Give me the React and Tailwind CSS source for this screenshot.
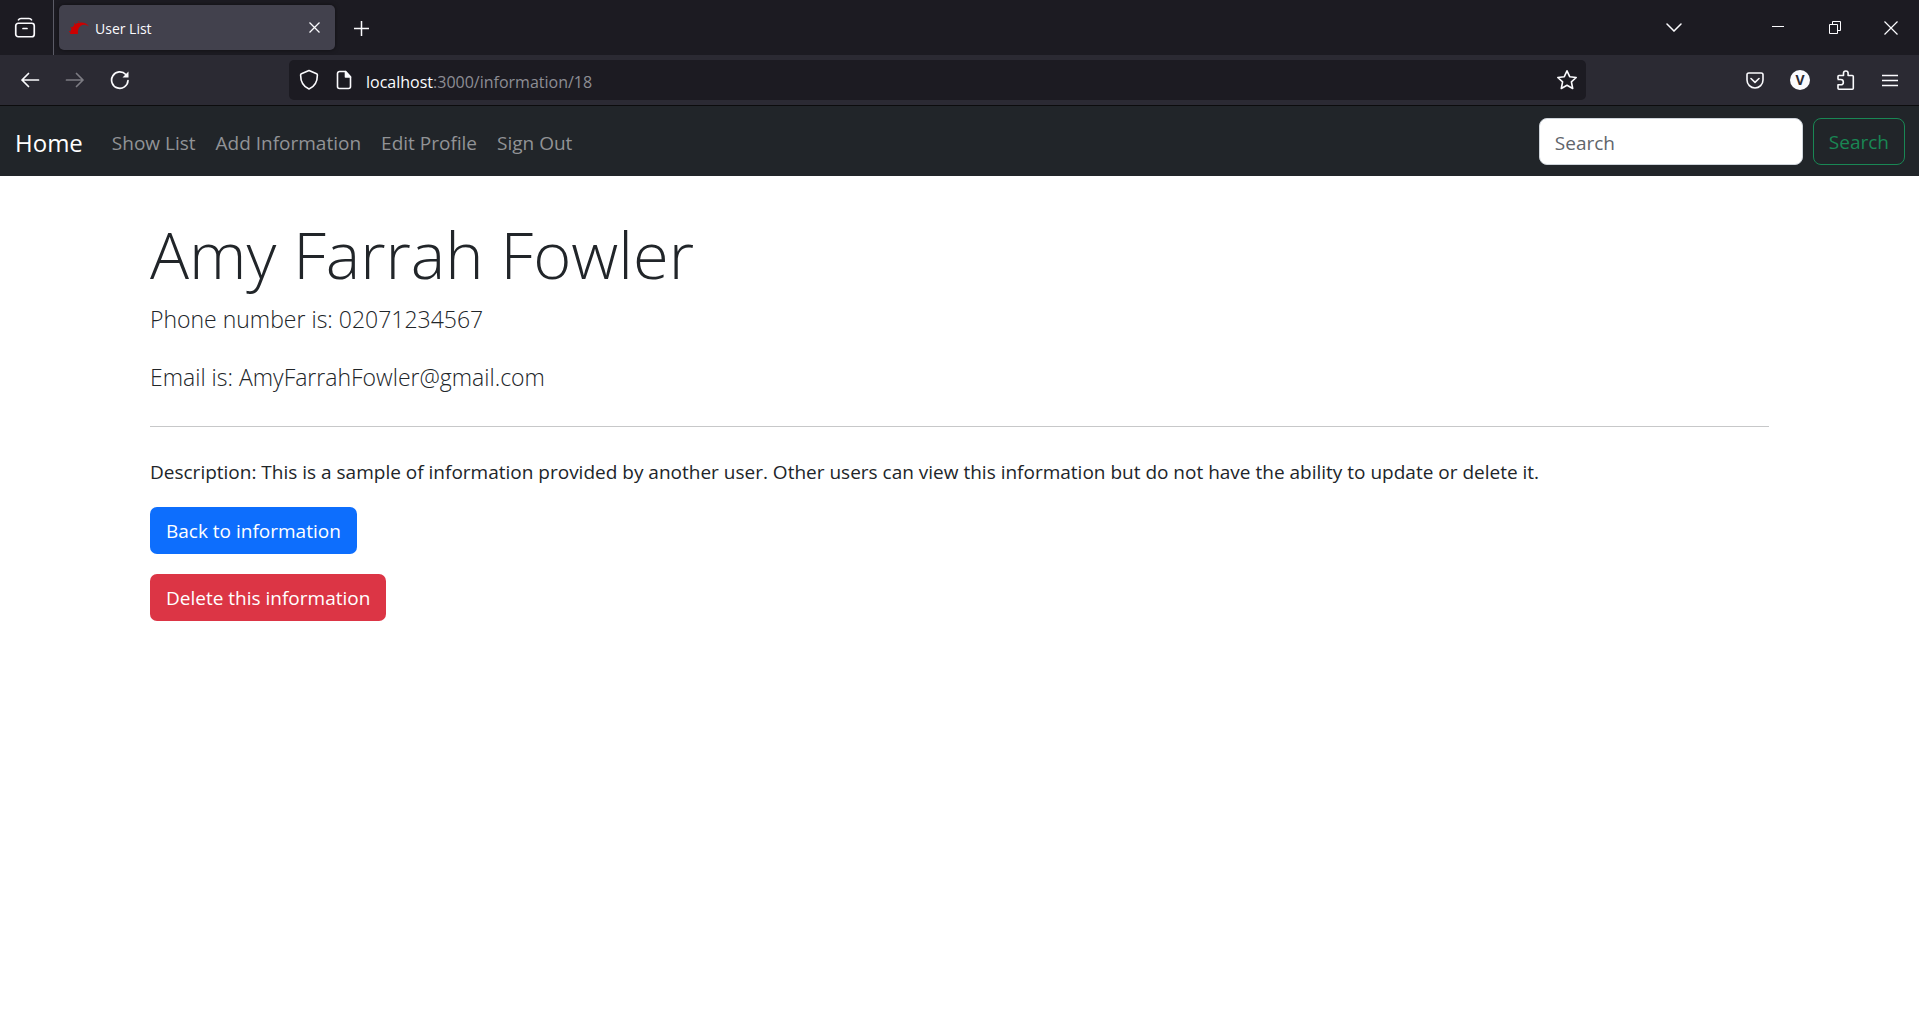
const ICON = 'shrink-0 fill-none stroke-[#fbfbfe]';

function NavItem({ children }) {
  return (
    <a href="#" className="text-[19px] leading-[30px] text-[#919396]">
      {children}
    </a>
  );
}

function ToolButton({ label, children }) {
  return (
    <button type="button" aria-label={label} className="grid size-10 place-items-center">
      {children}
    </button>
  );
}

function TabBar() {
  return (
    <div className="flex h-[55px] items-center bg-[#1c1b22]">
      <div className="flex h-full w-[54px] items-center justify-center border-r border-[#5b5b66] pr-1">
        <button type="button" aria-label="Firefox View">
          <svg width="22" height="22" viewBox="0 0 22 22" className={ICON} strokeWidth="1.700" strokeLinecap="round">
            <rect x="1.75" y="6.25" width="18.5" height="13.5" rx="2.5" />
            <path d="M4.500 2.800C5 1.900 6 1.500 7 1.500h8c1 0 2 .4 2.500 1.300M9 11.500h4" />
          </svg>
        </button>
      </div>
      <div className="ml-[5px] flex h-[45px] w-[276px] items-center rounded-[5px] bg-[#42414d] pr-[15px] pl-[10px] shadow-[0_0_4px_rgba(0,0,0,0.5)]">
        <svg width="20" height="20" viewBox="0 0 20 20" className="shrink-0 fill-[#cc0000]">
          <path d="M1 16C2 9 6 4.500 12 4.500c4 0 6 1.500 8 4-3-2-6-2.500-8.500-.5C9 10 8.500 13 9 16z" />
          <path d="M0 13l1.500.5-.3 1L0 14zM2 8.800l1.200.7-.5.9-1.200-.7zM5.500 5l.8 1-.8.7-.8-1zM10 3l.4 1-1 .3-.4-1z" />
        </svg>
        <span className="ml-[6px] grow pt-[2px] text-[14px] text-[#fbfbfe]">User List</span>
        <button type="button" aria-label="Close tab">
          <svg width="11" height="11" viewBox="0 0 11 11" className={ICON} strokeWidth="1.300">
            <path d="M.5.5l10 10M10.500.5l-10 10" />
          </svg>
        </button>
      </div>
      <button type="button" aria-label="New tab" className="ml-[19px] pt-[2px]">
        <svg width="15" height="15" viewBox="0 0 15 15" className={ICON} strokeWidth="1.500">
          <path d="M0 7.500h15M7.500 0v15" />
        </svg>
      </button>
      <button type="button" aria-label="List all tabs" className="ml-auto">
        <svg width="16" height="9" viewBox="0 0 16 9" className={ICON} strokeWidth="1.500" strokeLinecap="round">
          <path d="M1 1l7 7 7-7" />
        </svg>
      </button>
      <button type="button" aria-label="Minimize" className="ml-[90px]">
        <svg width="12" height="12" viewBox="0 0 12 12" className={ICON}>
          <path d="M0 4.500h12" />
        </svg>
      </button>
      <button type="button" aria-label="Restore" className="ml-[45px]">
        <svg width="12" height="13" viewBox="0 0 12 13" className={ICON}>
          <path d="M.5 3.500h8v9h-8zM3.500 3.500v-3h8v9h-3" />
        </svg>
      </button>
      <button type="button" aria-label="Close window" className="mr-[21px] ml-[43px]">
        <svg width="14" height="14" viewBox="0 0 14 14" className={ICON} strokeWidth="1.200">
          <path d="M.5.5l13 13M13.500.5l-13 13" />
        </svg>
      </button>
    </div>
  );
}

function AddressBar() {
  return (
    <div className="flex h-[51px] items-center border-b border-[#0c0c0d] bg-[#2b2a33]">
      <div className="flex w-[289px] gap-[5px] pl-[10px]">
        <ToolButton label="Back">
          <svg width="20" height="16" viewBox="0 0 20 16" className={ICON} strokeWidth="1.700" strokeLinecap="round" strokeLinejoin="round">
            <path d="M18.500 8H2M8.500 1.500L2 8l6.500 6.500" />
          </svg>
        </ToolButton>
        <ToolButton label="Forward">
          <svg width="20" height="16" viewBox="0 0 20 16" className="fill-none stroke-[#7c7b82]" strokeWidth="1.700" strokeLinecap="round" strokeLinejoin="round">
            <path d="M1.500 8H18M11.500 1.500L18 8l-6.500 6.500" />
          </svg>
        </ToolButton>
        <ToolButton label="Reload">
          <svg width="20" height="20" viewBox="0 0 20 20" className={ICON} strokeWidth="1.700" strokeLinecap="round">
            <path d="M18 10.500A8.200 8.200 0 1 1 15.800 4.500" />
            <path d="M18.500 1.500v6h-6z" className="fill-[#fbfbfe] stroke-none" />
          </svg>
        </ToolButton>
      </div>
      <div className="flex h-10 w-[1297px] min-w-0 shrink items-center rounded-[5px] bg-[#1c1b22] pr-[8px] pl-[10px]">
        <svg width="20" height="22" viewBox="0 0 20 22" className={ICON} strokeWidth="1.600" strokeLinejoin="round">
          <path d="M10 1.500l7.600 3.200c.5.200.8.700.8 1.200 0 6.500-2.500 11.500-8.400 14.100C4.100 17.400 1.600 12.400 1.600 5.900c0-.5.3-1 .8-1.200z" />
        </svg>
        <svg width="16" height="20" viewBox="0 0 16 20" className="ml-[17px] shrink-0 fill-none stroke-[#fbfbfe]" strokeWidth="1.600" strokeLinejoin="round">
          <path d="M9.500 1.500H3.500a2 2 0 0 0-2 2v13a2 2 0 0 0 2 2h9a2 2 0 0 0 2-2V7z" />
          <path d="M9.500 1.500V7h5z" className="fill-[#fbfbfe]" />
        </svg>
        <p className="ml-[14px] grow pt-[3px] text-[16px] leading-5 text-[#8d8d94]">
          <span className="text-[#fbfbfe]">localhost</span>:3000/information/18
        </p>
        <button type="button" aria-label="Bookmark this page">
          <svg width="22" height="22" viewBox="0 0 22 22" className={ICON} strokeWidth="1.600" strokeLinejoin="round">
            <path d="M11 1.800l2.700 5.900 6.500.8-4.800 4.400 1.300 6.600L11 16.300l-5.700 3.200 1.300-6.600L1.800 8.500l6.500-.8z" />
          </svg>
        </button>
      </div>
      <div className="ml-auto flex gap-[5px] pr-[9px]">
        <ToolButton label="Save to Pocket">
          <svg width="18" height="17" viewBox="0 0 18 17" className={ICON} strokeWidth="1.600" strokeLinecap="round" strokeLinejoin="round">
            <path d="M2.800 1h12.400A1.800 1.800 0 0 1 17 2.800v5.200a8 8 0 0 1-16 0V2.800A1.800 1.800 0 0 1 2.800 1zM5 6.500l4 3.800 4-3.800" />
          </svg>
        </ToolButton>
        <ToolButton label="Account">
          <span className="grid size-5 place-items-center rounded-full bg-[#fbfbfe] text-[14px] leading-5 font-bold text-[#2b2a33]">V</span>
        </ToolButton>
        <ToolButton label="Extensions">
          <svg width="19" height="20" viewBox="0 0 19 20" className={ICON} strokeWidth="1.600" strokeLinejoin="round">
            <path d="M2 9V6.500a1 1 0 0 1 1-1h4.500V3.300a2.300 2.300 0 0 1 4.600 0v2.200h4.200a1 1 0 0 1 1 1v11.700a1 1 0 0 1-1 1H3a1 1 0 0 1-1-1v-3.400h2.700a2.300 2.300 0 0 0 0-5.300H1.500" />
          </svg>
        </ToolButton>
        <ToolButton label="Open menu">
          <svg width="16" height="13" viewBox="0 0 16 13" className={ICON} strokeWidth="1.500">
            <path d="M0 1.500h16M0 6.500h16M0 11.500h16" />
          </svg>
        </ToolButton>
      </div>
    </div>
  );
}

function Navbar() {
  return (
    <nav className="flex h-[70px] items-center bg-[#212529] pr-[14px] pl-[15px]">
      <a href="#" className="pt-[3px] text-[24px] leading-[38px] text-white">Home</a>
      <div className="ml-[29px] flex gap-5 pt-[3px]">
        <NavItem>Show List</NavItem>
        <NavItem>Add Information</NavItem>
        <NavItem>Edit Profile</NavItem>
        <NavItem>Sign Out</NavItem>
      </div>
      <form className="ml-auto flex gap-[10px]" onSubmit={(e) => e.preventDefault()}>
        <input
          type="search"
          aria-label="Search"
          placeholder="Search"
          className="h-[47px] w-[264px] rounded-[8px] border border-[#ced4da] bg-white px-[15px] pt-[3px] text-[19px] text-[#212529] placeholder:text-[#5f656b]"
        />
        <button type="submit" className="h-[47px] rounded-[8px] border border-[#198754] px-[15px] pt-[3px] text-[19px] text-[#198754]">
          Search
        </button>
      </form>
    </nav>
  );
}

export default function App() {
  return (
    <div className="min-h-screen bg-white font-['Open_Sans','Noto_Sans',sans-serif] text-[#212529]">
      <header>
        <TabBar />
        <AddressBar />
        <Navbar />
      </header>
      <main className="mx-[150px] pt-[37px] text-[19px] leading-[30px]">
        <h1 className="mb-[5px] text-[65px] leading-[82px] font-light">Amy Farrah Fowler</h1>
        <p className="mb-5 text-[23px] leading-[38px] font-light">Phone number is: 02071234567</p>
        <p className="text-[23px] leading-[38px] font-light">Email is: AmyFarrahFowler@gmail.com</p>
        <hr className="my-[30px] border-[#c7c8c9]" />
        <p className="mb-5">
          Description: This is a sample of information provided by another user. Other users can view this information but do not have the ability to update or delete it.
        </p>
        <div className="flex flex-col items-start gap-5">
          <a href="#" className="rounded-[7px] bg-[#0d6efd] px-4 pt-[9px] pb-[7px] leading-[31px] text-white">Back to information</a>
          <button type="button" className="rounded-[7px] bg-[#dc3545] px-4 pt-[9px] pb-[7px] leading-[31px] text-white">Delete this information</button>
        </div>
      </main>
    </div>
  );
}
